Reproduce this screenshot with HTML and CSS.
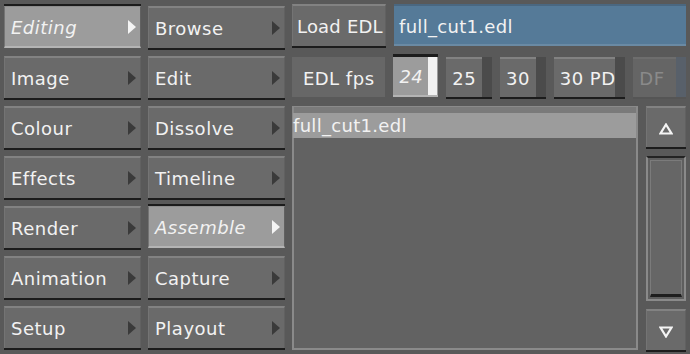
FILE: index.html
```html
<!DOCTYPE html>
<html>
<head>
<meta charset="utf-8">
<link rel="stylesheet" href="styles.css">
</head>
<body>
<div class="app">
  <div class="col">
    <div class="btn on"><span class="lbl it">Editing</span><svg class="arr" width="8" height="14" viewBox="0 0 8 14"><polygon points="0,0 8,7 0,14"/></svg></div>
    <div class="btn"><span class="lbl">Image</span><svg class="arr" width="8" height="14" viewBox="0 0 8 14"><polygon points="0,0 8,7 0,14"/></svg></div>
    <div class="btn"><span class="lbl">Colour</span><svg class="arr" width="8" height="14" viewBox="0 0 8 14"><polygon points="0,0 8,7 0,14"/></svg></div>
    <div class="btn"><span class="lbl">Effects</span><svg class="arr" width="8" height="14" viewBox="0 0 8 14"><polygon points="0,0 8,7 0,14"/></svg></div>
    <div class="btn"><span class="lbl">Render</span><svg class="arr" width="8" height="14" viewBox="0 0 8 14"><polygon points="0,0 8,7 0,14"/></svg></div>
    <div class="btn"><span class="lbl">Animation</span><svg class="arr" width="8" height="14" viewBox="0 0 8 14"><polygon points="0,0 8,7 0,14"/></svg></div>
    <div class="btn"><span class="lbl">Setup</span><svg class="arr" width="8" height="14" viewBox="0 0 8 14"><polygon points="0,0 8,7 0,14"/></svg></div>
  </div>
  <div class="col">
    <div class="btn"><span class="lbl">Browse</span><svg class="arr" width="8" height="14" viewBox="0 0 8 14"><polygon points="0,0 8,7 0,14"/></svg></div>
    <div class="btn"><span class="lbl">Edit</span><svg class="arr" width="8" height="14" viewBox="0 0 8 14"><polygon points="0,0 8,7 0,14"/></svg></div>
    <div class="btn"><span class="lbl">Dissolve</span><svg class="arr" width="8" height="14" viewBox="0 0 8 14"><polygon points="0,0 8,7 0,14"/></svg></div>
    <div class="btn"><span class="lbl">Timeline</span><svg class="arr" width="8" height="14" viewBox="0 0 8 14"><polygon points="0,0 8,7 0,14"/></svg></div>
    <div class="btn on"><span class="lbl it">Assemble</span><svg class="arr" width="8" height="14" viewBox="0 0 8 14"><polygon points="0,0 8,7 0,14"/></svg></div>
    <div class="btn"><span class="lbl">Capture</span><svg class="arr" width="8" height="14" viewBox="0 0 8 14"><polygon points="0,0 8,7 0,14"/></svg></div>
    <div class="btn"><span class="lbl">Playout</span><svg class="arr" width="8" height="14" viewBox="0 0 8 14"><polygon points="0,0 8,7 0,14"/></svg></div>
  </div>
  <div class="panel">
    <div class="row1">
      <div class="btn load"><span class="lbl">Load EDL</span></div>
      <div class="field">full_cut1.edl</div>
    </div>
    <div class="row2">
      <div class="tag">EDL fps</div>
      <div class="tog on w45"><span class="lbl it">24</span><span class="ind"></span></div>
      <div class="tog w46"><span class="lbl">25</span><span class="ind"></span></div>
      <div class="tog w46"><span class="lbl">30</span><span class="ind"></span></div>
      <div class="tog w72"><span class="lbl">30 PD</span><span class="ind"></span></div>
      <div class="tog dis w53"><span class="lbl">DF</span><span class="ind"></span></div>
    </div>
    <div class="row3">
      <div class="list">
        <div class="lhead"></div>
        <div class="item">full_cut1.edl</div>
      </div>
      <div class="scroll">
        <div class="btn sbtn"><svg width="14" height="12" viewBox="0 0 14 12"><polygon points="7,1.5 12.5,10.5 1.5,10.5" fill="none" stroke="#f4f4f4" stroke-width="2.2"/></svg></div>
        <div class="track"><div class="thumb"></div></div>
        <div class="btn sbtn"><svg width="14" height="12" viewBox="0 0 14 12"><polygon points="7,10.5 12.5,1.5 1.5,1.5" fill="none" stroke="#f4f4f4" stroke-width="2.2"/></svg></div>
      </div>
    </div>
  </div>
</div>
</body>
</html>
```
FILE: styles.css
```css
* { box-sizing: border-box; }
html, body { margin: 0; padding: 0; }
body {
  width: 690px;
  height: 354px;
  background: #595959;
  font-family: "DejaVu Sans", sans-serif;
  font-size: 18px;
  color: #f2f2f2;
  overflow: hidden;
}
.app {
  display: flex;
  gap: 7px;
  padding: 6px 4px 0 4px;
}
.col {
  width: 137px;
  display: flex;
  flex-direction: column;
  gap: 8px;
}
.btn {
  position: relative;
  height: 42px;
  background: #6a6a6a;
  border-top: 2px solid #828282;
  border-left: 1px solid #747474;
  border-right: 1px solid #616161;
  box-shadow: 0 2px 0 #1c1c1c;
  display: flex;
  align-items: center;
  padding-left: 6px;
  padding-top: 2px;
  white-space: nowrap;
}
.btn.on {
  background: #9c9c9c;
  border-top: 1px solid #8e8e8e;
  border-bottom: 2px solid #b4b4b4;
  box-shadow: 0 -2px 0 #1c1c1c;
}
.lbl { line-height: 1; letter-spacing: 0.5px; white-space: nowrap; }
.it { font-style: italic; }
.arr {
  position: absolute;
  right: 4px;
  top: 13px;
  fill: #3a3a3a;
}
.btn.on .arr { fill: #f4f4f4; }
.panel {
  width: 394px;
  display: flex;
  flex-direction: column;
}
.row1 {
  display: flex;
  gap: 8px;
  height: 42px;
  margin-top: -2px;
}
.load {
  width: 94px;
  flex: none;
  padding-left: 4px;
}
.load .lbl { letter-spacing: 0.2px; }
.field {
  flex: 1;
  background: #557a98;
  border-top: 2px solid #4a6780;
  border-bottom: 2px solid #6a8aa4;
  padding-left: 5px;
  padding-top: 2px;
  display: flex;
  align-items: center;
  letter-spacing: 0.3px;
}
.row2 {
  display: flex;
  gap: 8px;
  margin-top: 11px;
  height: 40px;
}
.tag {
  width: 94px;
  background: #676767;
  display: flex;
  align-items: center;
  justify-content: center;
  padding-top: 2px;
  letter-spacing: 0.5px;
}
.tog {
  position: relative;
  height: 40px;
  background: #6a6a6a;
  border-top: 2px solid #828282;
  box-shadow: 0 2px 0 #1c1c1c;
  display: flex;
  align-items: center;
  padding-left: 6px;
  padding-top: 2px;
}
.tog .ind {
  position: absolute;
  right: 0;
  top: -2px;
  bottom: 0;
  width: 10px;
  background: #4b4b4b;
}
.tog.on {
  background: #9c9c9c;
  border-top: none;
  border-bottom: 2px solid #b4b4b4;
  box-shadow: 0 -3px 0 #1c1c1c;
}
.tog.on .ind { top: 0; right: 1px; width: 9px; background: #f2f2f2; }
.tog.dis { color: #8a8a8a; background: #656565; border-top-color: #6d6d6d; box-shadow: 0 2px 0 #555; }
.tog.dis .ind { background: #58606a; }
.w45 { width: 45px; }
.w46 { width: 46px; }
.w72 { width: 72px; }
.w53 { width: 53px; }
.row3 {
  display: flex;
  gap: 8px;
  margin-top: 9px;
}
.list {
  width: 346px;
  height: 244px;
  background: #626262;
  border: 2px solid #8a8a8a;
  border-top: none;
}
.lhead {
  height: 7px;
  background: #7a7a7a;
  border-top: 1px solid #8a8a8a;
}
.item {
  height: 25px;
  background: #9c9c9c;
  line-height: 26px;
  margin-left: -1px;
  letter-spacing: 0.3px;
}
.scroll {
  width: 40px;
  display: flex;
  flex-direction: column;
  gap: 8px;
}
.sbtn {
  height: 41px;
  justify-content: center;
  padding-left: 0;
}
.track {
  height: 145px;
  border: 2px solid #8a8a8a;
  border-top: 2px solid #232323;
  padding: 2px;
  background: #5e5e5e;
  margin-top: 1px;
}
.thumb {
  height: 100%;
  background: #666;
  border: 1px solid #7b7b7b;
  border-bottom: 3px solid #1e1e1e;
}
```
